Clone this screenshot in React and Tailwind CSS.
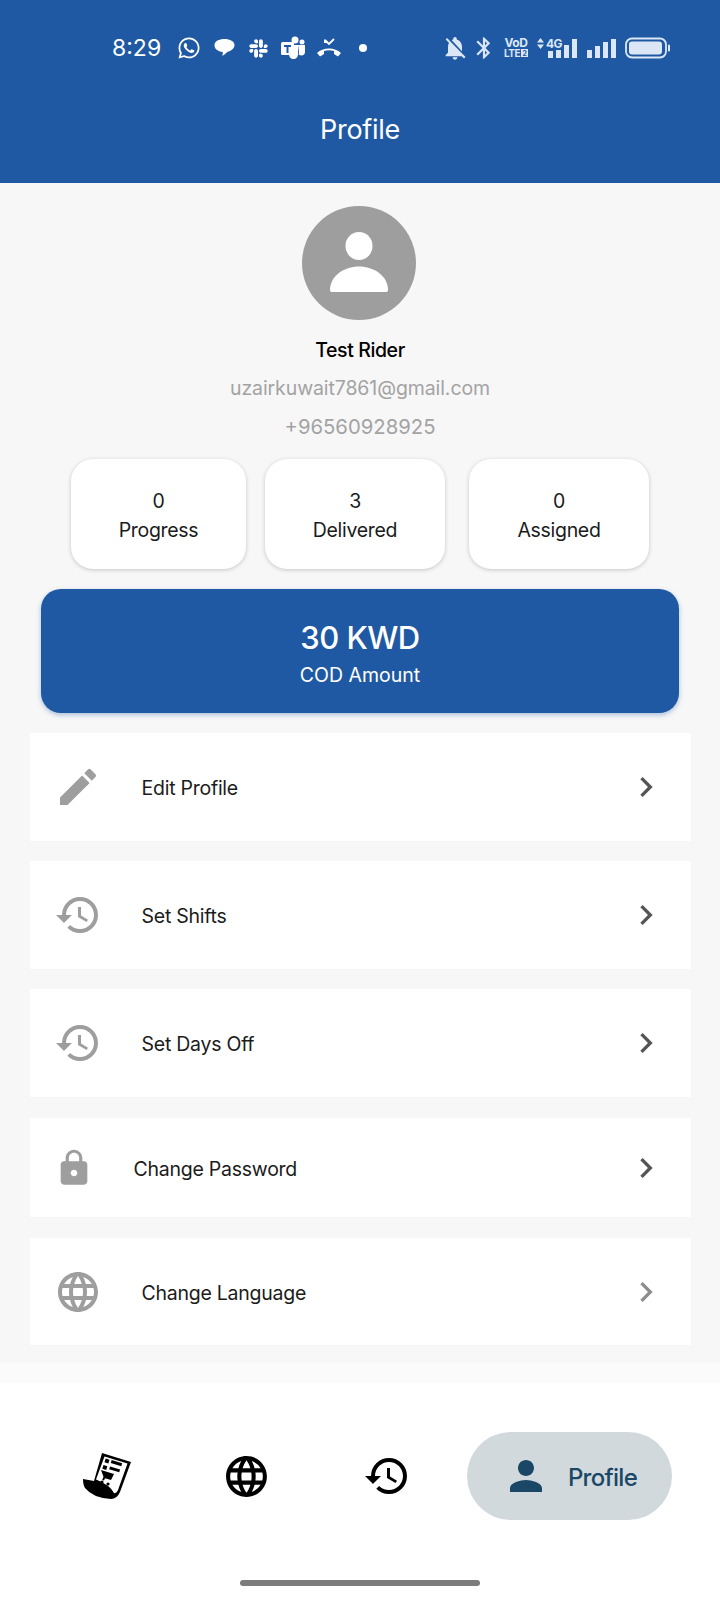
import { FaSlack, FaWhatsapp } from "react-icons/fa";
import {
  MdBluetooth,
  MdChevronRight,
  MdEdit,
  MdHistory,
  MdLanguage,
  MdLock,
  MdNotificationsOff,
  MdPerson,
} from "react-icons/md";

const stats = [
  { value: "0", label: "Progress", box: "w-[175px]" },
  { value: "3", label: "Delivered", box: "ml-[19px] w-[180px]" },
  { value: "0", label: "Assigned", box: "ml-[24px] w-[180px]" },
];

// Status bar glyphs that no icon set has in this form.
function BubbleIcon() {
  return (
    <svg width="23" height="20" viewBox="0 0 20 18" fill="#fff">
      <path d="M10 1c5 0 9 2.2 9 5.500S15 12 12.500 12.500C11 14 9.500 15.500 8 16c.5-1.500.5-2.500.4-3.500C4 12 1 10 1 6.500S5 1 10 1z" />
    </svg>
  );
}

function TeamsIcon() {
  return (
    <svg width="25" height="24" viewBox="0 0 25 24" fill="#fff">
      <circle cx="14" cy="4" r="3.500" />
      <circle cx="21" cy="6" r="2.500" />
      <path d="M17 9h7v7c0 2-1.500 3.500-3.500 3.500-1 0-2-.3-2.800-1 .2-.8.300-1.500.3-2.500z" />
      <path d="M8 9h9v9c0 3-2 5-4.500 5S8 21 8 18z" />
      <rect x="0" y="6" width="13" height="13" rx="1.500" />
      <path d="M3 9h7v2H7.500v6h-2v-6H3z" fill="#2059a3" />
    </svg>
  );
}

function MissedCallIcon() {
  return (
    <svg width="26" height="20" viewBox="0 0 26 20" fill="#fff">
      <path d="M1 15c6-6 18-6 24 0l-3 3.500-4-2.500v-3c-3-1-7-1-10 0v3l-4 2.500z" />
      <path d="M9 2l4 4 5-5" fill="none" stroke="#fff" strokeWidth="1.800" />
      <path d="M8 1v4h4z" />
    </svg>
  );
}

function SignalBars({ bars }) {
  return (
    <div className="flex items-end gap-[3px]">
      {bars.map((height, index) => (
        <span
          key={index}
          className="w-[5px] bg-[#dbe7f7]"
          style={{ height }}
        />
      ))}
    </div>
  );
}

function BatteryIcon() {
  return (
    <svg width="46" height="22" viewBox="0 0 46 22">
      <rect x="1" y="1.500" width="40" height="19" rx="6" fill="none" stroke="#dbe7f7" strokeWidth="1.800" />
      <rect x="4" y="4.500" width="33" height="13" rx="3" fill="#dbe7f7" />
      <rect x="43" y="7.500" width="2" height="7" rx="1" fill="#dbe7f7" />
    </svg>
  );
}

function StatusBar() {
  return (
    <div className="flex h-[65px] items-end pl-[112px] pr-[49px] text-white">
      <div className="flex h-[34px] w-full items-center justify-between">
        <div className="flex items-center">
          <span className="w-[50px] text-[23px] leading-none">8:29</span>
          <FaWhatsapp size={24} className="ml-[15px]" />
          <span className="ml-[12px]"><BubbleIcon /></span>
          <FaSlack size={21} className="ml-[12px]" />
          <span className="ml-[12px]"><TeamsIcon /></span>
          <span className="ml-[10px]"><MissedCallIcon /></span>
          <span className="ml-[17px] h-[8px] w-[8px] rounded-full bg-white" />
        </div>
        <div className="flex items-center text-[#dbe7f7]">
          <MdNotificationsOff size={28} />
          <MdBluetooth size={26} className="ml-[2px]" />
          <div className="ml-[7px] flex w-[24px] flex-col items-center text-[12px] font-bold leading-[10px] tracking-[-0.5px]">
            <span>VoD</span>
            <span className="flex items-center gap-[1px] text-[10px]">
              LTE
              <span className="flex h-[8px] w-[7px] items-center justify-center bg-[#dbe7f7] text-[7px] leading-none text-[#2059a3]">
                2
              </span>
            </span>
          </div>
          <div className="relative ml-[9px] w-[40px]">
            <div className="absolute left-0 top-[-1px] flex items-center gap-[2px]">
              <svg width="7" height="11" viewBox="0 0 7 11" fill="#dbe7f7">
                <path d="M3.500 0L7 4.500H0zM3.500 11L0 6.500h7z" />
              </svg>
              <span className="text-[12px] font-bold leading-none tracking-[-0.5px]">4G</span>
            </div>
            <div className="flex justify-end">
              <SignalBars bars={[7, 8, 13, 19]} />
            </div>
          </div>
          <div className="ml-[10px]">
            <SignalBars bars={[8, 12, 16, 19]} />
          </div>
          <div className="ml-[9px]"><BatteryIcon /></div>
        </div>
      </div>
    </div>
  );
}

function ReceiptCartIcon() {
  return (
    <svg width="50" height="48" viewBox="0 0 50 48">
      <path d="M19 1L48 10 37 40Q34 47 28 47 10 46 2 36 0 33 0 27L11 29Z" fill="#000" />
      <path d="M21.500 4.500L44.500 11.500 35 38Q33.500 42 31 41 27 33 13 27.500Z" fill="#fff" />
      <rect x="22" y="7" width="4" height="4" transform="rotate(17 24 9)" />
      <rect x="28" y="9.500" width="11" height="3" transform="rotate(17 33 11)" />
      <rect x="20" y="13.500" width="4" height="4" transform="rotate(17 22 15)" />
      <rect x="26.500" y="16" width="10.500" height="3" transform="rotate(17 32 17)" />
      <path d="M18 18l13 4-3 6-6-1.800-1 2.300-1.800-.5 1.300-3.300z" />
      <circle cx="19" cy="30" r="1.600" />
      <circle cx="25" cy="32" r="1.600" />
    </svg>
  );
}

function MenuRow({ icon, label, height, textClass, chevronClass }) {
  return (
    <div className={`mx-[29.5px] flex items-center bg-white ${height}`}>
      <div className="flex w-[84px] justify-center pl-[12px]">{icon}</div>
      <span className={`pt-[4px] text-[19.5px] tracking-[-0.25px] text-[#1b1b1b] ${textClass}`}>
        {label}
      </span>
      <MdChevronRight size={40} className={`ml-auto mr-[25px] ${chevronClass}`} />
    </div>
  );
}

export default function App() {
  return (
    <div className="flex h-[1600px] w-[720px] flex-col overflow-hidden bg-white font-['Inter',sans-serif]">
      <header className="h-[183px] bg-[#2059a3]">
        <StatusBar />
        <h1 className="mt-[48px] text-center text-[27px] leading-[34px] tracking-[-0.3px] text-white">
          Profile
        </h1>
      </header>

      <main className="h-[1180px] bg-[#f7f7f7] pt-[23px]">
        <div className="ml-[302px] flex h-[114px] w-[114px] items-center justify-center rounded-full bg-[#9e9e9e]">
          <svg width="66" height="66" viewBox="0 0 66 66" fill="#fff">
            <ellipse cx="33" cy="16" rx="13.500" ry="14" />
            <path d="M4 60C4 46 18 36.500 33 36.500S62 46 62 60c0 1.500-1 2-2 2H6c-1 0-2-.5-2-2z" />
          </svg>
        </div>

        <div className="mt-[17px] text-center">
          <p className="text-[19.5px] font-medium leading-[26px] tracking-[-0.4px] text-black">
            Test Rider
          </p>
          <p className="mt-[12px] text-[19.5px] leading-[26px] tracking-[-0.1px] text-[#a3a3a3]">
            uzairkuwait7861@gmail.com
          </p>
          <p className="mt-[13px] text-[20.3px] leading-[26px] text-[#a3a3a3]">
            +96560928925
          </p>
        </div>

        <div className="ml-[71px] mt-[19px] flex">
          {stats.map((stat) => (
            <div
              key={stat.label}
              className={`flex h-[110px] flex-col items-center justify-center rounded-[22px] bg-white pt-[4px] text-[19.5px] leading-[29px] tracking-[-0.3px] text-[#1b1b1b] shadow-[0_1px_4px_rgba(0,0,0,0.2)] ${stat.box}`}
            >
              <span>{stat.value}</span>
              <span>{stat.label}</span>
            </div>
          ))}
        </div>

        <div className="mx-[41px] mt-[20px] flex h-[124px] flex-col items-center justify-center rounded-[20px] bg-[#2059a3] pt-[8px] text-white shadow-[0_2px_5px_rgba(32,89,163,0.35)]">
          <span className="text-[31px] font-medium leading-[40px] tracking-[-0.5px]">30 KWD</span>
          <span className="text-[19.5px] leading-[34px]">COD Amount</span>
        </div>

        <div className="mt-[20px] flex flex-col gap-[20px]">
          <MenuRow
            height="h-[108px]"
            icon={<MdEdit size={48} className="text-[#9e9e9e]" />}
            label="Edit Profile"
            textClass="ml-[28px]"
            chevronClass="text-[#555555]"
          />
          <MenuRow
            height="h-[108px]"
            icon={<MdHistory size={48} className="text-[#9e9e9e]" />}
            label="Set Shifts"
            textClass="ml-[28px]"
            chevronClass="text-[#555555]"
          />
          <MenuRow
            height="h-[108px]"
            icon={<MdHistory size={48} className="text-[#9e9e9e]" />}
            label="Set Days Off"
            textClass="ml-[28px]"
            chevronClass="text-[#555555]"
          />
          <MenuRow
            height="mt-[1px] h-[99px]"
            icon={<MdLock size={40} className="mr-[8px] text-[#9e9e9e]" />}
            label="Change Password"
            textClass="ml-[20px]"
            chevronClass="text-[#555555]"
          />
          <MenuRow
            height="mt-[1px] h-[107px]"
            icon={<MdLanguage size={48} className="text-[#9e9e9e]" />}
            label="Change Language"
            textClass="ml-[28px]"
            chevronClass="text-[#8d8d8d]"
          />
        </div>
      </main>

      <nav className="relative flex-1 border-t-[20px] border-[#fbfbfb]">
        <div className="mt-[49px] flex h-[88px] items-center pl-[83px] pr-[48px]">
          <ReceiptCartIcon />
          <MdLanguage size={49} className="ml-[89px] text-black" />
          <MdHistory size={48} className="ml-[92px] text-black" />
          <div className="ml-auto flex h-[88px] w-[205px] items-center justify-center rounded-full bg-[#d2d9dd] text-[#1a4766]">
            <MdPerson size={48} />
            <span className="ml-[18px] pt-[4px] text-[24px] font-medium tracking-[-0.7px]">
              Profile
            </span>
          </div>
        </div>
        <div className="absolute bottom-[14px] left-[240px] h-[6px] w-[240px] rounded-full bg-[#7c7c7c]" />
      </nav>
    </div>
  );
}
